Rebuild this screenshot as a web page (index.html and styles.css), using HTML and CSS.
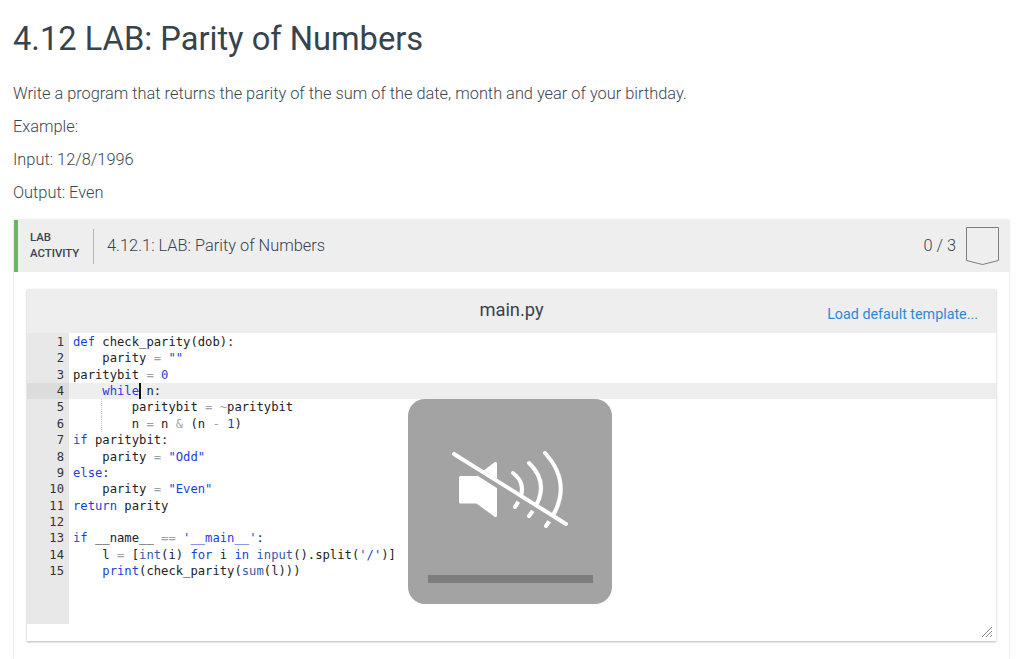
FILE: index.html
```html
<!DOCTYPE html>
<html lang="en">
<head>
<meta charset="utf-8">
<title>4.12 LAB: Parity of Numbers</title>
<link rel="stylesheet" href="styles.css">
</head>
<body>
<main class="page">
  <h1 class="title">4.12 LAB: Parity of Numbers</h1>
  <p class="para">Write a program that returns the parity of the sum of the date, month and year of your birthday.</p>
  <p class="para">Example:</p>
  <p class="para">Input: 12/8/1996</p>
  <p class="para">Output: Even</p>

  <section class="lab">
    <header class="lab-head">
      <div class="lab-tag">LAB<br>ACTIVITY</div>
      <div class="lab-name">4.12.1: LAB: Parity of Numbers</div>
      <div class="lab-score">0 / 3</div>
      <svg class="lab-badge" width="34" height="38" viewBox="0 0 34 38">
        <path d="M.5 .5H32.5V33.5L16.5 37.5L.5 33.5Z" fill="none" stroke="#7d7d7d" stroke-width="1"/>
      </svg>
    </header>
    <div class="lab-body">
      <div class="editor">
        <div class="editor-head">
          <div class="file-name">main.py</div>
          <a class="load-link">Load default template...</a>
        </div>
        <div class="editor-main">
          <div class="gutter">
            <div class="num">1</div><div class="num">2</div><div class="num">3</div>
            <div class="num num-active">4</div><div class="num">5</div><div class="num">6</div>
            <div class="num">7</div><div class="num">8</div><div class="num">9</div>
            <div class="num">10</div><div class="num">11</div><div class="num">12</div>
            <div class="num">13</div><div class="num">14</div><div class="num">15</div>
          </div>
          <div class="code">
            <div class="line"><span class="kw">def</span> check_parity(dob):</div>
            <div class="line">    parity <span class="op">=</span> <span class="str">""</span></div>
            <div class="line">paritybit <span class="op">=</span> <span class="str">0</span></div>
            <div class="line line-active">    <span class="kw">while</span><span class="caret"></span> n:</div>
            <div class="line"><span class="guide"></span>        paritybit <span class="op">=</span> <span class="op">~</span>paritybit</div>
            <div class="line"><span class="guide"></span>        n <span class="op">=</span> n <span class="op">&amp;</span> (n <span class="op">-</span> <span class="str">1</span>)</div>
            <div class="line"><span class="kw">if</span> paritybit:</div>
            <div class="line">    parity <span class="op">=</span> <span class="str">"Odd"</span></div>
            <div class="line"><span class="kw">else</span>:</div>
            <div class="line">    parity <span class="op">=</span> <span class="str">"Even"</span></div>
            <div class="line"><span class="kw">return</span> parity</div>
            <div class="line">&nbsp;</div>
            <div class="line"><span class="kw">if</span> __name__ <span class="op">==</span> <span class="str">'__main__'</span>:</div>
            <div class="line">    l <span class="op">=</span> [<span class="fn">int</span>(i) <span class="kw">for</span> i <span class="kw">in</span> <span class="fn">input</span>().split(<span class="str">'/'</span>)]</div>
            <div class="line">    <span class="kw">print</span>(check_parity(<span class="fn">sum</span>(l)))</div>
          </div>
          <div class="resize" aria-hidden="true">
            <svg width="12" height="12" viewBox="0 0 12 12">
              <path d="M1 11L11 1M5 11L11 5M9 11L11 9" stroke="#8c8c8c" stroke-width="1" fill="none"/>
            </svg>
          </div>
        </div>
      </div>
    </div>
  </section>
</main>

<div class="hud">
  <svg class="hud-icon" width="120" height="90" viewBox="0 0 120 90">
    <path d="M10.5 28.5H27L45.5 14.5V66.5L27 53H10.5Z" fill="#fff" stroke="#fff" stroke-width="3" stroke-linejoin="round"/>
    <g fill="none" stroke="#fff" stroke-width="4" stroke-linecap="round">
      <path d="M63 24Q80 37 65 58"/>
      <path d="M79 14Q103 37 79 67"/>
      <path d="M95 4Q126 38 96 77"/>
      <path d="M4 7L117 79" stroke="#a3a3a3" stroke-width="8" stroke-linecap="butt"/>
      <path d="M4 5L116 75"/>
    </g>
  </svg>
  <div class="hud-bar"></div>
</div>
</body>
</html>
```

FILE: styles.css
```css
html, body {
  margin: 0;
  height: 659px;
  overflow: hidden;
  background: #fff;
}

.page {
  padding: 0 15px 0 14px;
  font-family: Roboto, "Liberation Sans", sans-serif;
  color: #37434d;
}

.title {
  margin: 0 0 0 -1px;
  padding-top: 19px;
  height: 40px;
  font-size: 32.65px;
  line-height: 40px;
  font-weight: 400;
  color: #37434d;
}

.para {
  margin: 0 0 0 -1px;
  height: 33px;
  font-size: 16.36px;
  line-height: 33px;
  font-weight: 300;
  color: #3c4750;
}

.title + .para {
  margin-top: 18px;
}

.lab {
  margin-top: 11px;
  box-shadow: 0 0 2px rgba(0, 0, 0, .2);
}

.lab-head {
  display: flex;
  align-items: center;
  height: 52px;
  background: #eeeeee;
  border-left: 4px solid #6ab463;
  box-sizing: border-box;
}

.lab-tag {
  width: 63px;
  margin-left: 12px;
  height: 35px;
  border-right: 1px solid #b5b5b5;
  font-size: 11.4px;
  line-height: 16px;
  font-weight: 500;
  color: #37434d;
}

.lab-name {
  margin: -2px 0 0 13px;
  flex: 1;
  font-size: 16.36px;
  font-weight: 300;
  color: #37434d;
}

.lab-score {
  margin: -2px 10px 0 0;
  font-size: 16.36px;
  font-weight: 300;
  color: #37434d;
}

.lab-badge {
  margin: -1px 9px 0 0;
}

.lab-body {
  padding: 17px 13px 0 13px;
  height: 387px;
  box-sizing: border-box;
}

.editor {
  height: 352px;
  display: flex;
  flex-direction: column;
  box-shadow: 0 1px 2px rgba(0, 0, 0, .3);
  background: #fff;
}

.editor-head {
  position: relative;
  height: 44px;
  flex: none;
  display: flex;
  align-items: center;
  justify-content: flex-end;
  background: #eeeeee;
}

.file-name {
  position: absolute;
  left: 0;
  right: 0;
  top: 10px;
  text-align: center;
  font-size: 18.3px;
  line-height: 22px;
  color: #37434d;
}

.load-link {
  margin: 6px 18px 0 0;
  font-size: 14.3px;
  color: #2b8ad6;
}

.editor-main {
  position: relative;
  flex: 1;
  display: flex;
  align-items: flex-start;
  min-height: 0;
}

.gutter {
  flex: none;
  width: 42px;
  height: 291px;
  box-sizing: border-box;
  padding-top: 1px;
  background: #e8e8e8;
  font-family: "DejaVu Sans Mono", "Liberation Mono", monospace;
  font-size: 12.2px;
  line-height: 16.36px;
  color: #333;
}

.num {
  height: 16.36px;
  padding-right: 5px;
  text-align: right;
}

.num-active {
  background: #dcdcdc;
}

.code {
  flex: 1;
  padding-top: 1px;
  font-family: "DejaVu Sans Mono", "Liberation Mono", monospace;
  font-size: 12.2px;
  line-height: 16.36px;
  color: #222;
}

.line {
  position: relative;
  height: 16.36px;
  padding-left: 4px;
  white-space: pre;
}

.line-active {
  background: #eeeeee;
}

.kw, .str {
  color: #1a3fd8;
}

.fn {
  color: #2f5ea8;
}

.op {
  color: #9aa3ad;
}

.caret {
  display: inline-block;
  width: 2px;
  height: 16px;
  margin: 0 -2px 0 0;
  vertical-align: top;
  background: #111;
}

.guide {
  position: absolute;
  left: 32px;
  top: 0;
  bottom: 0;
  border-left: 1px dotted #ccc;
}

.resize {
  position: absolute;
  right: 3px;
  bottom: 3px;
  line-height: 0;
}

.hud {
  position: absolute;
  left: 408px;
  top: 399px;
  width: 204px;
  height: 205px;
  border-radius: 17px;
  background: #a3a3a3;
}

.hud-icon {
  position: absolute;
  left: 42px;
  top: 50px;
}

.hud-bar {
  position: absolute;
  left: 20px;
  top: 176px;
  width: 165px;
  height: 8px;
  background: #7d7d7d;
}
```
